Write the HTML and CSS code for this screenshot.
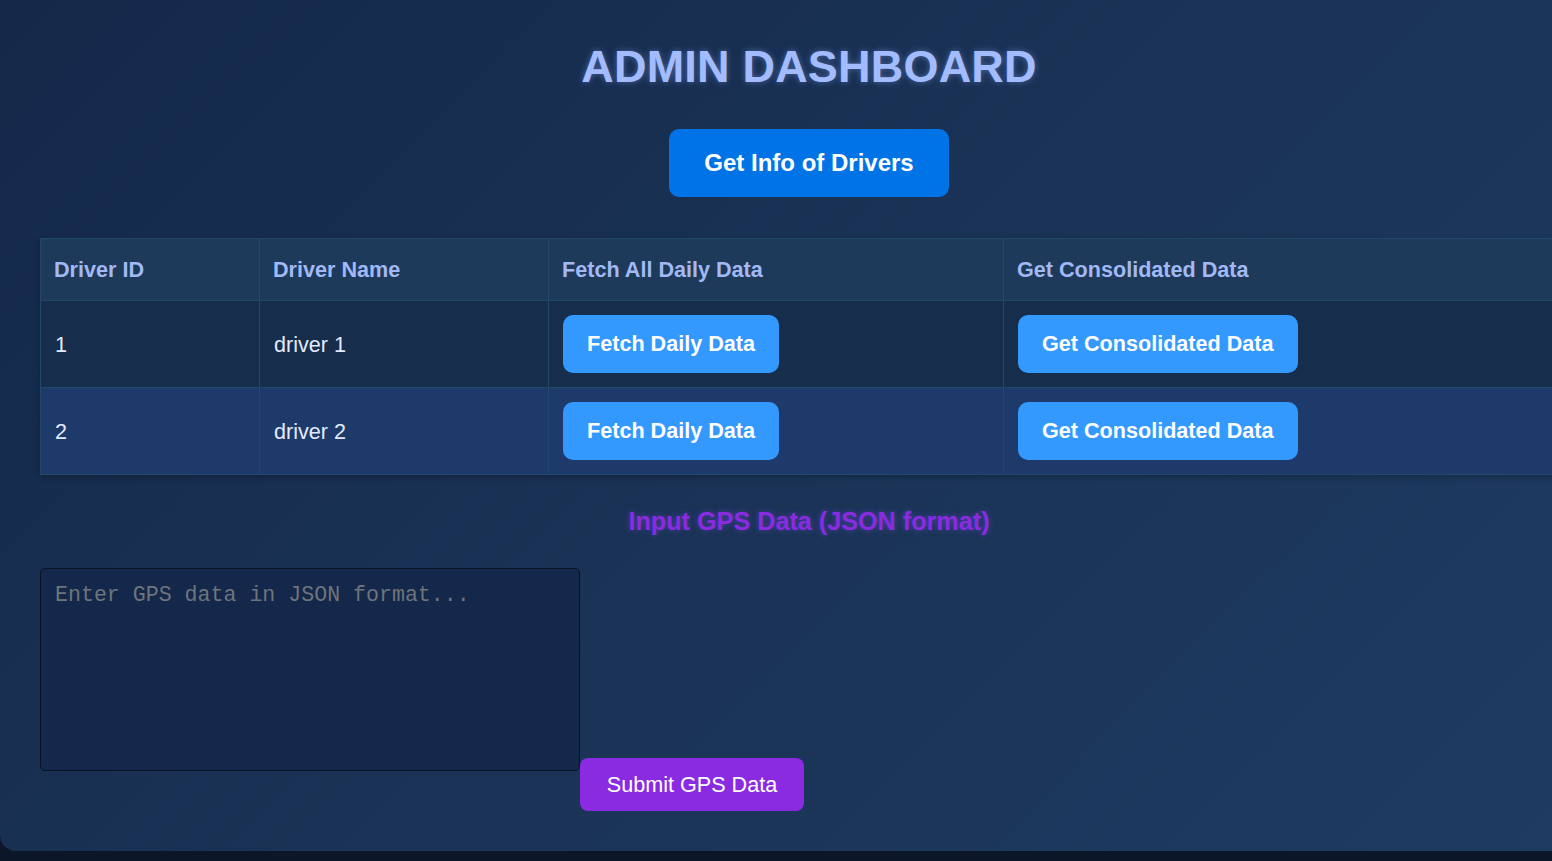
FILE: index.html
```html
<!DOCTYPE html>
<html lang="en">
<head>
<meta charset="utf-8">
<title>Admin Dashboard</title>
<link rel="stylesheet" href="styles.css">
</head>
<body>
<div class="dashboard">
  <h1 class="title">ADMIN DASHBOARD</h1>
  <div class="center">
    <button class="btn-info">Get Info of Drivers</button>
  </div>
  <table class="drivers">
    <thead>
      <tr>
        <th class="c1">Driver ID</th>
        <th class="c2">Driver Name</th>
        <th class="c3">Fetch All Daily Data</th>
        <th class="c4">Get Consolidated Data</th>
      </tr>
    </thead>
    <tbody>
      <tr class="odd">
        <td>1</td>
        <td>driver 1</td>
        <td><button class="btn-row">Fetch Daily Data</button></td>
        <td><button class="btn-row">Get Consolidated Data</button></td>
      </tr>
      <tr class="even">
        <td>2</td>
        <td>driver 2</td>
        <td><button class="btn-row">Fetch Daily Data</button></td>
        <td><button class="btn-row">Get Consolidated Data</button></td>
      </tr>
    </tbody>
  </table>
  <h2 class="gps-title">Input GPS Data (JSON format)</h2>
  <div class="gps-row">
    <textarea class="gps-input" placeholder="Enter GPS data in JSON format..."></textarea>
    <button class="btn-submit">Submit GPS Data</button>
  </div>
</div>
</body>
</html>
```
FILE: styles.css
```css
html, body {
  margin: 0;
  padding: 0;
}
body {
  background: #0b1729;
  font-family: "Liberation Sans", Arial, sans-serif;
  font-size: 18px;
  overflow: hidden;
  width: 1552px;
  height: 861px;
}
.dashboard {
  width: 1618px;
  box-sizing: border-box;
  height: 851px;
  padding: 41px 40px 40px;
  background: linear-gradient(135deg, #14284a 0%, #1a3356 50%, #1e3b62 100%);
  border-radius: 0 0 16px 16px;
}
.title {
  margin: 0;
  text-align: center;
  font-size: 45px;
  font-weight: bold;
  letter-spacing: 0.2px;
  color: #a3bbff;
  text-shadow: 0 0 6px rgba(140, 170, 255, 0.45);
  line-height: 52px;
}
.center {
  text-align: center;
  margin-top: 36px;
}
.btn-info {
  background: #0074e6;
  color: #ffffff;
  border: none;
  border-radius: 10px;
  font-family: "Liberation Sans", Arial, sans-serif;
  font-weight: bold;
  font-size: 24px;
  line-height: 28px;
  padding: 20px 30px;
  width: 280px;
  height: 68px;
  white-space: nowrap;
}
.drivers {
  margin-top: 41px;
  width: 1538px;
  border-collapse: collapse;
  box-shadow: 0 2px 6px rgba(0, 0, 0, 0.25);
}
.drivers th, .drivers td {
  border: 1px solid #214869;
  text-align: left;
  font-size: 21.6px;
  vertical-align: middle;
}
.drivers th {
  background: #1e3a5a;
  color: #a2b9f5;
  font-weight: bold;
  padding: 18px 13px;
  line-height: 25px;
}
.drivers td {
  color: #e2eaff;
  padding: 14px 14px;
  line-height: 25px;
}
.c1 { width: 192px; }
.c2 { width: 262px; }
.c3 { width: 428px; }
.odd td { background: #172d4c; }
.even td { background: #1e3a6a; }
.btn-row {
  background: #3399ff;
  color: #ffffff;
  border: none;
  border-radius: 10px;
  font-family: "Liberation Sans", Arial, sans-serif;
  font-weight: bold;
  font-size: 21.6px;
  line-height: 24px;
  padding: 17px 24px;
  display: block;
  white-space: nowrap;
}
.gps-title {
  margin: 32px 0 0;
  text-align: center;
  font-size: 25.2px;
  line-height: 29px;
  font-weight: bold;
  color: #8a2be2;
  text-shadow: 0 0 6px rgba(140, 80, 255, 0.45);
}
.gps-row {
  display: flex;
  align-items: flex-end;
  margin-top: 32px;
}
.gps-input {
  box-sizing: border-box;
  width: 540px;
  height: 203px;
  margin: 0 0 40px;
  padding: 14px;
  background: #13284a;
  border: 1px solid #0a1220;
  border-radius: 5px;
  color: #d0d8e8;
  font-family: "Liberation Mono", "Courier New", monospace;
  font-size: 21.6px;
  resize: none;
  outline: none;
}
.gps-input::placeholder {
  color: #6f747c;
}
.btn-submit {
  background: #8a2be2;
  color: #ffffff;
  border: none;
  border-radius: 8px;
  font-family: "Liberation Sans", Arial, sans-serif;
  font-size: 21.6px;
  line-height: 25px;
  padding: 14px 20px;
  width: 224px;
  height: 53px;
  white-space: nowrap;
}
```
